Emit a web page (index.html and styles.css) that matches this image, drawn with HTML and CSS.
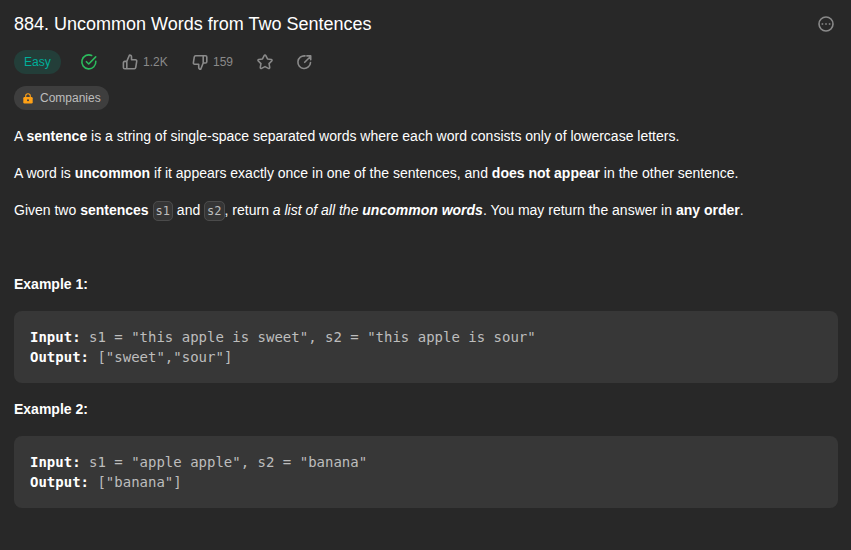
FILE: index.html
```html
<!DOCTYPE html>
<html lang="en">
<head>
<meta charset="utf-8">
<title>884. Uncommon Words from Two Sentences</title>
<link rel="stylesheet" href="styles.css">
</head>
<body>
<main class="problem">
  <header class="title-row">
    <h1 class="title">884. Uncommon Words from Two Sentences</h1>
    <svg class="icon more" viewBox="0 0 18 18"><circle cx="9" cy="9" r="7"/><path class="dots" d="M4.600 9h1.600M8.200 9h1.600M11.800 9h1.600"/></svg>
  </header>
  <div class="stats">
    <span class="chip easy">Easy</span>
    <svg class="icon solved" viewBox="0 0 18 18"><path d="M11.700 2.500A7 7 0 1 0 15.800 8.200"/><path d="M6.400 8.700l2.300 2.300L15.700 3.900"/></svg>
    <span class="vote up"><svg class="icon" viewBox="0 0 18 18"><path d="M5.800 15.700H3.700a1.300 1.300 0 0 1-1.300-1.300V9.700a1.300 1.300 0 0 1 1.300-1.300h2.100M10.500 6.700V4A2 2 0 0 0 8.500 2L5.800 8.400v7.300h7.600a1.400 1.400 0 0 0 1.300-1.100l1-6.200a1.400 1.400 0 0 0-1.300-1.700z"/></svg>1.2K</span>
    <span class="vote down"><svg class="icon" viewBox="0 0 18 18"><path d="M12.200 2.700h2.300A1.300 1.300 0 0 1 15.800 4v4.700a1.300 1.300 0 0 1-1.300 1.300h-2.300M7.700 11.300v2.900a2 2 0 0 0 2 2l2.500-6.200V2.700H4.600a1.400 1.400 0 0 0-1.300 1.100l-.9 5.800a1.400 1.400 0 0 0 1.300 1.700z"/></svg>159</span>
    <svg class="icon star" viewBox="0 0 24 24"><path d="M10.900 3.400a1.250 1.250 0 0 1 2.200 0l2.200 4.500 5 .7a1.250 1.250 0 0 1 .7 2.100l-3.600 3.500.9 5a1.250 1.250 0 0 1-1.800 1.300L12 18.200l-4.500 2.300a1.250 1.250 0 0 1-1.800-1.300l.9-5L3 10.700a1.250 1.250 0 0 1 .7-2.100l5-.7z"/></svg>
    <svg class="icon share" viewBox="0 0 18 18"><path d="M9 2.900A6.300 6.300 0 1 0 14.500 9.600M8.700 9.300L14.500 3.500M10.900 2.900H14.700V6.700"/></svg>
  </div>
  <div class="tags">
    <span class="chip companies"><svg class="lock" viewBox="0 0 10 11"><path class="shackle" d="M2.700 5V3a2.300 2.300 0 0 1 4.600 0v2"/><rect x=".3" y="4" width="9.400" height="6.500" rx="1.200"/><circle cx="5" cy="7.200" r="1"/></svg>Companies</span>
  </div>
  <article class="description">
    <p>A <strong>sentence</strong> is a string of single-space separated words where each word consists only of lowercase letters.</p>
    <p>A word is <strong>uncommon</strong> if it appears exactly once in one of the sentences, and <strong>does not appear</strong> in the other sentence.</p>
    <p>Given two <strong>sentences</strong> <code>s1</code> and <code>s2</code>, return <em>a list of all the <strong>uncommon words</strong></em>. You may return the answer in <strong>any order</strong>.</p>
    <p>&nbsp;</p>
    <p><strong>Example 1:</strong></p>
<pre><strong>Input:</strong> s1 = "this apple is sweet", s2 = "this apple is sour"
<strong>Output:</strong> ["sweet","sour"]</pre>
    <p><strong>Example 2:</strong></p>
<pre><strong>Input:</strong> s1 = "apple apple", s2 = "banana"
<strong>Output:</strong> ["banana"]</pre>
  </article>
</main>
</body>
</html>
```
FILE: styles.css
```css
* { box-sizing: border-box; }
body {
  margin: 0;
  min-height: 100vh;
  background: #282828;
  color: #fff;
  font: 14px/21px "Liberation Sans", Arial, sans-serif;
}
.problem { padding: 12px 13px 0 14px; }
.title-row { display: flex; align-items: center; justify-content: space-between; height: 24px; }
.title { margin: 0; font-size: 18px; line-height: 24px; font-weight: 400; }
.icon {
  display: block;
  flex: none;
  width: 18px;
  height: 18px;
  fill: none;
  stroke: #8a8a8a;
  stroke-width: 1.6;
  stroke-linecap: round;
  stroke-linejoin: round;
}
.more { margin-right: 3px; }
.more .dots { stroke-linecap: butt; }
.stats {
  display: flex;
  align-items: center;
  height: 24px;
  margin-top: 14px;
  color: #8a8a8a;
  font-size: 12px;
  line-height: 16px;
}
.chip {
  display: inline-flex;
  align-items: center;
  height: 24px;
  padding: 0 10px;
  border-radius: 12px;
  font-size: 12px;
  line-height: 16px;
}
.easy { width: 47px; background: #233e39; color: #00af9b; }
.solved { margin-left: 19px; stroke: #2cbb5d; }
.vote { display: flex; align-items: center; gap: 4px; }
.up { width: 47px; margin-left: 23px; }
.down { width: 42px; margin-left: 23px; }
.star { margin-left: 23px; stroke-width: 2.1; }
.share { margin-left: 22px; }
.tags { display: flex; height: 24px; margin-top: 12px; }
.companies { width: 95px; padding: 0 9px; gap: 7px; background: #3e3e3e; color: #bdbdbd; }
.lock { flex: none; width: 10px; height: 11px; fill: #ffa116; }
.lock .shackle { fill: none; stroke: #ffa116; stroke-width: 1.1; }
.lock circle { fill: #3e3e3e; }
.description { margin-top: 16px; }
.description p { height: 21px; margin: 0 0 16px; white-space: nowrap; }
code, pre { font-family: "DejaVu Sans Mono", monospace; }
code {
  padding: 2px;
  border: 1px solid #4b4b4b;
  border-radius: 5px;
  background: #353535;
  color: #bdbdbd;
  font-size: 12px;
}
pre {
  height: 72px;
  margin: 0 0 16px;
  padding: 16px;
  border-radius: 8px;
  background: #373737;
  color: #bdbdbd;
  font-size: 14px;
  line-height: 20px;
}
pre strong { color: #fff; }
```
